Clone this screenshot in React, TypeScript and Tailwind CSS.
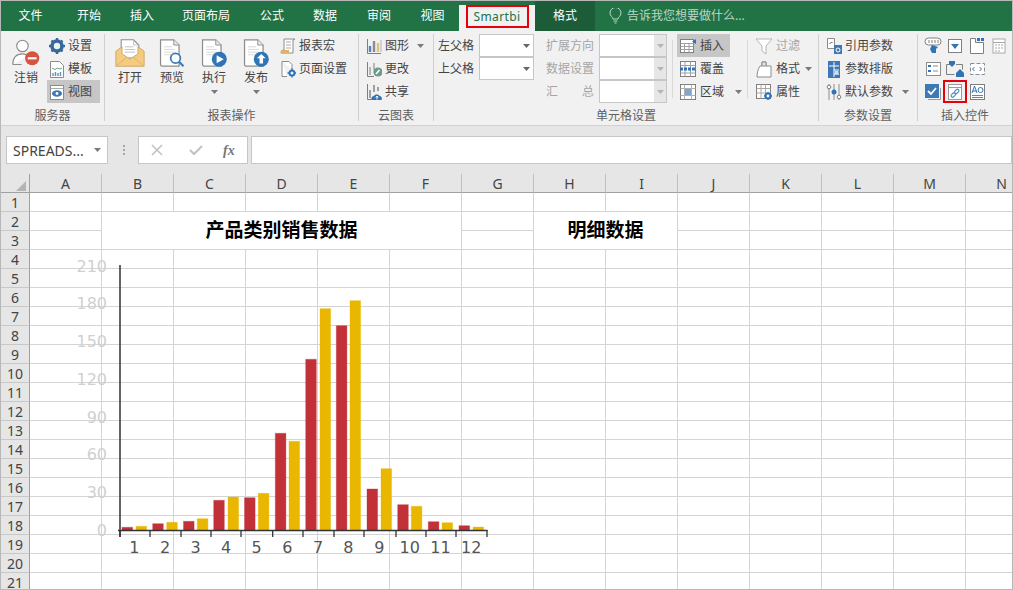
import type { ReactNode } from "react";

const tabs = [
  { name: "文件", w: "w-[59px]" },
  { name: "开始", w: "w-[58px]" },
  { name: "插入", w: "w-[48px]" },
  { name: "页面布局", w: "w-[80px]" },
  { name: "公式", w: "w-[52px]" },
  { name: "数据", w: "w-[54px]" },
  { name: "审阅", w: "w-[54px]" },
  { name: "视图", w: "w-[53px]" },
];

const columns = ["A", "B", "C", "D", "E", "F", "G", "H", "I", "J", "K", "L", "M", "N"];
const rows = Array.from({ length: 21 }, (_, i) => i + 1);

// left, top of each bar pair, read off the picture
const bars = [
  [122, 527.3, 136, 526.3],
  [152.7, 523.7, 166.7, 522.3],
  [183.5, 521.3, 197.3, 518.7],
  [213.7, 500.3, 228, 497],
  [244.5, 497.7, 258.3, 493.3],
  [275.3, 433.3, 289, 441.3],
  [305.7, 359.3, 320, 308.7],
  [336.3, 325.7, 350, 300.7],
  [367, 489, 381, 468.7],
  [397.7, 504.7, 411.3, 506.3],
  [428.3, 521.7, 442, 522.7],
  [459, 525.7, 473, 527],
];
const ticks = [120, 150, 181, 211, 241, 272.7, 303, 334, 364, 396, 426, 456, 487];
const yLabels = [
  ["210", 266],
  ["180", 303],
  ["150", 341],
  ["120", 379],
  ["90", 417],
  ["60", 454],
  ["30", 492],
  ["0", 530],
] as const;

const Caret = ({ color = "#7a7a7a" }: { color?: string }) => (
  <svg width="7" height="4" viewBox="0 0 7 4" className="shrink-0">
    <path d="M0 0h7L3.5 4z" fill={color} />
  </svg>
);

const Ico = ({ children, w = 16 }: { children: ReactNode; w?: number }) => (
  <svg width={w} height="18" viewBox={`0 0 ${w} 18`} fill="none" className="shrink-0">
    {children}
  </svg>
);

const Doc = () => (
  <>
    <path d="M4 2h15l6 6v24H6a2 2 0 0 1-2-2z" fill="#fff" stroke="#8c8c8c" strokeWidth="1.4" />
    <path d="M19 2v6h6" fill="#e8e8e8" stroke="#8c8c8c" />
    <path d="M8 10h9M8 13h12M8 16h12M8 19h8" stroke="#d4d4d4" />
  </>
);

const Big = ({ children }: { children: ReactNode }) => (
  <svg width="30" height="30" viewBox="0 0 34 34" fill="none" className="shrink-0">
    {children}
  </svg>
);

const LogoutIcon = () => (
  <Big>
    <circle cx="13" cy="9" r="6.5" fill="#fff" stroke="#8c8c8c" strokeWidth="1.3" />
    <path d="M2 30c0-8 4-12 11-12 3 0 5 1 7 2M2 30h10" stroke="#8c8c8c" strokeWidth="1.3" fill="#fff" />
    <circle cx="24" cy="23" r="8" fill="#d9543f" />
    <path d="M19 23h10" stroke="#fff" strokeWidth="2.4" />
  </Big>
);

const OpenIcon = () => (
  <Big>
    <path d="M7 2h14l6 6v16H7z" fill="#fff" stroke="#8c8c8c" strokeWidth="1.2" />
    <path d="M21 2v6h6M11 10h10M11 13h12M11 16h12" stroke="#bdbdbd" />
    <path d="M1 15l7-5v8l9 6 9-6v-8l7 5v17H1z" fill="#f4cb7f" stroke="#c9a25e" />
    <path d="M1 32l12-10h8l12 10" stroke="#dcb267" />
  </Big>
);

const PreviewIcon = () => (
  <Big>
    <Doc />
    <circle cx="21" cy="23" r="5.5" fill="#fff" stroke="#3d7ab5" strokeWidth="2" />
    <path d="M25 27l5 5" stroke="#3d7ab5" strokeWidth="2.4" />
  </Big>
);

const RunIcon = () => (
  <Big>
    <Doc />
    <circle cx="23" cy="24" r="8.5" fill="#2f75b5" />
    <path d="M20 19.5l8 4.5-8 4.5z" fill="#fff" />
  </Big>
);

const PublishIcon = () => (
  <Big>
    <Doc />
    <circle cx="23" cy="24" r="8.5" fill="#2f75b5" />
    <path d="M23 18l5 5h-3v6h-4v-6h-3z" fill="#fff" />
  </Big>
);

const GearIcon = () => (
  <Ico>
    <circle cx="8" cy="9" r="5" stroke="#35689c" strokeWidth="3.6" />
    <path d="M8 1v3M8 14v3M0 9h3M13 9h3M2.5 3.5l2 2M11.5 12.5l2 2M2.5 14.5l2-2M11.5 5.5l2-2" stroke="#35689c" strokeWidth="2.4" />
  </Ico>
);

const TemplateIcon = () => (
  <Ico>
    <path d="M1.5 1.5h9l4 4v12h-13z" fill="#fff" stroke="#8c8c8c" />
    <path d="M3 8l3 1.5 2-1.5 3 1 2-1" stroke="#6aa67c" />
    <path d="M4 16v-3M6.5 16v-4M9 16v-3M11.5 16v-4" stroke="#5c8fc4" strokeWidth="1.4" />
  </Ico>
);

const ViewIcon = () => (
  <Ico>
    <rect x="1.5" y="2.5" width="13" height="14" fill="#fff" stroke="#8c8c8c" />
    <path d="M1.5 5.5h13" stroke="#a8a8a8" />
    <ellipse cx="8" cy="10.5" rx="5" ry="3.2" fill="#3d7ab5" />
    <circle cx="8" cy="10.5" r="1.4" fill="#fff" />
  </Ico>
);

const MacroIcon = () => (
  <Ico>
    <path d="M4 2h11l-2 1v13H1c0-2 1-3 3-3z" fill="#fff" stroke="#8c8c8c" />
    <path d="M6 5h5M6 8h5M6 11h5" stroke="#a8a8a8" />
    <path d="M1 13h8v3H1z" fill="#e2b264" />
  </Ico>
);

const PageSetupIcon = () => (
  <Ico>
    <path d="M2 1.5h7l3 3v5M2 1.5v15h5" stroke="#8c8c8c" fill="#fff" />
    <circle cx="12" cy="13" r="2.5" stroke="#2f75b5" strokeWidth="2" />
    <path d="M12 8.5v2M12 15.5v2M7.5 13h2M14.5 13h2" stroke="#2f75b5" strokeWidth="1.4" />
  </Ico>
);

const ShapeIcon = () => (
  <Ico>
    <path d="M1.5 2v14.5H15" stroke="#7f7f7f" />
    <path d="M4 15V9" stroke="#4f86bd" strokeWidth="2.4" />
    <path d="M8 15V4" stroke="#8c8c8c" strokeWidth="2.4" />
    <path d="M12 15V6" stroke="#e6c07b" strokeWidth="2.4" />
    <path d="M15 15V3" stroke="#c4c4c4" strokeWidth="1.4" />
  </Ico>
);

const ChangeIcon = () => (
  <Ico>
    <path d="M1.5 2v14.5H8" stroke="#7f7f7f" />
    <path d="M4 15V7M8 10V3" stroke="#a8a8a8" strokeWidth="1.6" />
    <circle cx="12" cy="12" r="4.6" fill="#6c9a86" />
    <path d="M10 14l3.5-4" stroke="#fff" strokeWidth="1.6" />
  </Ico>
);

const ShareIcon = () => (
  <Ico>
    <path d="M1.5 1v15.5H7" stroke="#7f7f7f" />
    <path d="M4 15V7M8 9V2M12 8V4" stroke="#8c8c8c" strokeWidth="1.6" />
    <path d="M6 17c-1.500-2 0-4 2-4 .5-2 5-2 5.500 0 2 0 3 2 2 4z" fill="#2f75b5" />
    <path d="M11 16.500v-3M9.800 14.500l1.200-1.500 1.200 1.500" stroke="#fff" />
  </Ico>
);

const InsertIcon = () => (
  <Ico w={18}>
    <rect x="1.500" y="2.500" width="13" height="13" fill="#fff" stroke="#7f7f7f" />
    <path d="M1.500 6.500h13M1.500 9.500h13M1.500 12.500h13M5.500 6.500v9M10 6.500v9" stroke="#a0a0a0" />
    <path d="M13 4.500l4-2.500v5z" fill="#2f75b5" />
  </Ico>
);

const CoverIcon = () => (
  <Ico w={18}>
    <rect x="1.500" y="1.500" width="15" height="15" fill="#fff" stroke="#7f7f7f" />
    <path d="M1.500 5.500h15M1.500 13h15M6 1.500v15M11.500 1.500v15" stroke="#a0a0a0" />
    <path d="M1 9h16" stroke="#2f75b5" strokeWidth="3" strokeDasharray="3 1" />
  </Ico>
);

const AreaIcon = () => (
  <Ico w={18}>
    <rect x="1.500" y="1.500" width="15" height="15" fill="#fff" stroke="#7f7f7f" />
    <path d="M1.500 5.500h15M1.500 12.500h15M5.500 1.500v15M12.500 1.500v15" stroke="#b0b0b0" />
    <rect x="6" y="6" width="6" height="6" fill="#7fa6cc" />
  </Ico>
);

const FilterIcon = () => (
  <Ico w={18}>
    <path d="M1 2h16l-6 7v8l-4-3V9z" fill="#fff" stroke="#b5b5b5" />
  </Ico>
);

const FormatIcon = () => (
  <Ico w={18}>
    <path d="M7 2h4v4h5v11H2c0-4 1-8 3-11h2z" fill="#fff" stroke="#8c8c8c" />
    <path d="M7 2h4v4H7z" fill="#e3e3e3" stroke="#8c8c8c" />
  </Ico>
);

const PropIcon = () => (
  <Ico w={18}>
    <rect x="1.500" y="1.500" width="14" height="14" fill="#fff" stroke="#7f7f7f" />
    <path d="M1.500 5.500h14M1.500 10h14M6 1.500v14M10.500 1.500v14" stroke="#a8a8a8" />
    <circle cx="13" cy="13" r="2.500" stroke="#2f75b5" strokeWidth="2.200" />
    <path d="M13 9v1.500M13 15.500v1.500M9 13h1.500M15.500 13h1.500" stroke="#2f75b5" strokeWidth="1.400" />
  </Ico>
);

const RefParamIcon = () => (
  <Ico>
    <path d="M1.500 1.500h7v10h-7z" fill="#fff" stroke="#8c8c8c" />
    <path d="M3.500 7l2-2 1 1" stroke="#5b5b5b" />
    <rect x="8" y="8" width="8" height="9" fill="#3d7ab5" />
    <circle cx="12" cy="13" r="2" stroke="#fff" />
  </Ico>
);

const LayoutParamIcon = () => (
  <Ico>
    <rect x="2" y="1" width="12" height="17" fill="#3d7ab5" />
    <path d="M8 2v15M3 6h10M8 10h5M8 14h5" stroke="#fff" />
    <rect x="9" y="11" width="3.500" height="3.500" fill="#cfe0f0" />
  </Ico>
);

const DefaultParamIcon = () => (
  <Ico>
    <path d="M3 1v16M8 1v16M13 1v16" stroke="#8c8c8c" />
    <circle cx="3" cy="4" r="1.800" fill="#fff" stroke="#7f7f7f" />
    <circle cx="8" cy="9" r="2.500" fill="#2f75b5" />
    <circle cx="13" cy="14" r="1.800" fill="#fff" stroke="#7f7f7f" />
  </Ico>
);

const controls: { key: string; icon: ReactNode; boxed?: boolean }[] = [
  {
    key: "bubble",
    icon: (
      <Ico w={18}>
        <rect x="1" y="1" width="16" height="7" rx="3.500" fill="#fff" stroke="#7f7f7f" />
        <path d="M5 3v3M8 3v3M11 3v3M14 3v3" stroke="#7f7f7f" />
        <path d="M8 8l6 2-2 2v4H8l-2-4z" fill="#2f75b5" />
      </Ico>
    ),
  },
  {
    key: "combo",
    icon: (
      <Ico>
        <rect x="1.500" y="2.500" width="13" height="13" fill="#fff" stroke="#7f7f7f" />
        <path d="M4 7h8l-4 5z" fill="#2f75b5" />
      </Ico>
    ),
  },
  {
    key: "tab",
    icon: (
      <Ico>
        <path d="M1.500 1.500h5v4h8v11h-13z" fill="#fff" stroke="#7f7f7f" />
        <rect x="8" y="1" width="3" height="3" fill="#2f75b5" />
        <rect x="12" y="1" width="3" height="3" fill="#2f75b5" />
      </Ico>
    ),
  },
  {
    key: "date",
    icon: (
      <Ico w={14}>
        <rect x="1" y="2" width="12" height="14" fill="#fff" stroke="#a8a8a8" />
        <path d="M1 5.500h12M3 8h2M6 8h2M9 8h2M3 11h2M6 11h2M9 11h2M3 14h2M6 14h2" stroke="#a8a8a8" />
      </Ico>
    ),
  },
  {
    key: "list",
    icon: (
      <Ico>
        <rect x="1.500" y="2.500" width="14" height="13" fill="#fff" stroke="#8c8c8c" />
        <path d="M3 6h3M3 11h3" stroke="#2f75b5" strokeWidth="2" />
        <path d="M8 6h5M8 11h5" stroke="#8c8c8c" />
      </Ico>
    ),
  },
  {
    key: "tree",
    icon: (
      <Ico w={20}>
        <path d="M1.500 4.500h4M11 4.500h6.500v5M1.500 4.500v10h8" stroke="#7f7f7f" />
        <path d="M4 1h6v3l-3 3-3-3z" fill="#2f75b5" />
        <path d="M15 9l4 4v4h-8v-4z" fill="#2f75b5" />
      </Ico>
    ),
  },
  {
    key: "code",
    icon: (
      <Ico>
        <rect x="1.500" y="3.500" width="14" height="11" stroke="#8c8c8c" fill="#fff" strokeDasharray="4 2" />
        <path d="M5.500 7l-2 2 2 2M10.500 7l2 2-2 2" stroke="#2f75b5" />
      </Ico>
    ),
  },
  { key: "blank", icon: <span className="w-[14px]" /> },
  {
    key: "check",
    icon: (
      <Ico w={18}>
        <path d="M4 16.500h12.500V5" stroke="#9a9a9a" />
        <rect x="1" y="1" width="14" height="14" fill="#3d7ab5" />
        <path d="M4 8l3 3 5-6" stroke="#fff" strokeWidth="1.800" />
      </Ico>
    ),
  },
  {
    key: "link",
    boxed: true,
    icon: (
      <Ico>
        <rect x="1.500" y="1.500" width="13" height="15" fill="#fff" stroke="#9a9a9a" />
        <path d="M1.500 4.500h13" stroke="#9a9a9a" />
        <g stroke="#5b8fc4" strokeWidth="1.200">
          <rect x="3.800" y="10.500" width="5" height="3" rx="1.500" transform="rotate(-45 6.300 12)" />
          <rect x="7.200" y="7" width="5" height="3" rx="1.500" transform="rotate(-45 9.700 8.500)" />
        </g>
      </Ico>
    ),
  },
  {
    key: "text",
    icon: (
      <Ico>
        <rect x="1.500" y="1.500" width="14" height="15" fill="#fff" stroke="#7f7f7f" />
        <path d="M3 10l2.500-7L8 10M4 8h3" stroke="#2f75b5" />
        <circle cx="11.500" cy="7" r="2.500" stroke="#2f75b5" />
        <path d="M3 12.500h11M3 14.500h11" stroke="#7f7f7f" />
      </Ico>
    ),
  },
];

const Small = ({
  icon,
  label,
  selected,
  muted,
  caret,
}: {
  icon: ReactNode;
  label: string;
  selected?: boolean;
  muted?: boolean;
  caret?: string;
}) => (
  <div className={`flex h-[23px] items-center gap-[3px] px-[2px] ${selected ? "bg-[#c6c6c6]" : ""}`}>
    {icon}
    <span className={`whitespace-nowrap ${muted ? "text-[#a6a6a6]" : "text-[#444444]"}`}>{label}</span>
    {caret && (
      <span className={caret}>
        <Caret />
      </span>
    )}
  </div>
);

const BigButton = ({ icon, label, caret }: { icon: ReactNode; label: string; caret?: boolean }) => (
  <div className="flex w-[42px] flex-col items-center pt-[4px]">
    {icon}
    <span className="mt-[1px] leading-[18px] text-[#444444]">{label}</span>
    {caret && (
      <span className="mt-[3px] flex">
        <Caret />
      </span>
    )}
  </div>
);

const Group = ({ width, label, children }: { width: string; label: string; children: ReactNode }) => (
  <div className={`flex h-[87px] flex-col border-r border-[#d0d0d0] ${width}`}>
    <div className="flex h-[69px]">{children}</div>
    <div className="h-[18px] pt-[7px] text-center leading-[12px] text-[#5f5f5f]">{label}</div>
  </div>
);

const Select = ({ width, disabled }: { width: string; disabled?: boolean }) => (
  <div className={`flex h-[23px] items-stretch justify-end border border-[#c6c6c6] bg-white ${width}`}>
    <div className={`flex w-[12px] items-center justify-center ${disabled ? "bg-[#e6e6e6]" : "mr-[1px]"}`}>
      <Caret color={disabled ? "#b5b5b5" : "#666666"} />
    </div>
  </div>
);

const FieldLabel = ({ children, muted }: { children: ReactNode; muted?: boolean }) => (
  <div className={`flex h-[23px] items-center whitespace-nowrap ${muted ? "text-[#a6a6a6]" : "text-[#444444]"}`}>
    {children}
  </div>
);

const Chart = () => (
  <svg
    width="1011"
    height="416"
    viewBox="1 174 1011 416"
    className="pointer-events-none absolute top-0 left-0"
    fontFamily="DejaVu Sans, sans-serif"
    fontSize="16"
  >
    {yLabels.map(([t, y]) => (
      <text key={t} x="107" y={y + 6} textAnchor="end" fill="#d0d0d0">
        {t}
      </text>
    ))}
    {bars.map(([rx, ry, yx, yy], i) => (
      <g key={i}>
        <rect x={rx} y={ry} width="10.600" height={530 - ry} fill="#c23038" stroke="#c23038" strokeOpacity=".35" />
        <rect x={yx} y={yy} width="10.600" height={530 - yy} fill="#e9b600" stroke="#e9b600" strokeOpacity=".35" />
        <text x={(rx + yx + 10.600) / 2} y="553" textAnchor="middle" fill="#555555">
          {i + 1}
        </text>
      </g>
    ))}
    <path d="M120 265V537M118 530.500H487.500" stroke="#333333" strokeWidth="1.500" fill="none" />
    {ticks.map((x) => (
      <path key={x} d={`M${x} 530V537`} stroke="#333333" strokeWidth="1.300" />
    ))}
  </svg>
);

const Sheet = () => (
  <div className="relative grid grid-cols-[29px_repeat(14,72px)] grid-rows-[19px] auto-rows-[19px] bg-white font-['Noto_Sans','Noto_Sans_CJK_SC',sans-serif]">
    <div className="flex items-end justify-end border-r border-b border-[#a0a0a0] bg-[#e6e6e6] pr-[3px] pb-[1px]">
      <div className="h-0 w-0 border-t-[10px] border-l-[10px] border-t-transparent border-l-transparent [border-right:10px_solid_#b4b4b4]" />
    </div>
    {columns.map((c) => (
      <div
        key={c}
        className="flex items-center justify-center border-r border-b border-r-[#c0c0c0] border-b-[#a0a0a0] bg-[#e6e6e6] text-[14px] text-[#444444]"
      >
        {c}
      </div>
    ))}
    {rows.map((r) => (
      <div key={r} className="contents">
        <div className="flex items-center justify-center border-r border-b border-r-[#a0a0a0] border-b-[#c8c8c8] bg-[#e6e6e6] text-[14px] text-[#444444]">
          {r}
        </div>
        {columns.map((c) => {
          const merged = (r === 2 || r === 3) && ["B", "C", "D", "E", "F", "H", "I"].includes(c);
          if (!merged) {
            return <div key={c} className="border-r border-b border-[#d4d4d4]" />;
          }
          if (r === 2 && c === "B") {
            return (
              <div
                key={c}
                className="col-span-5 row-span-2 flex items-center justify-center border-r border-b border-[#d4d4d4] text-[19px] font-bold text-black"
              >
                产品类别销售数据
              </div>
            );
          }
          if (r === 2 && c === "H") {
            return (
              <div
                key={c}
                className="col-span-2 row-span-2 flex items-center justify-center border-r border-b border-[#d4d4d4] text-[19px] font-bold text-black"
              >
                明细数据
              </div>
            );
          }
          return null;
        })}
      </div>
    ))}
    <Chart />
  </div>
);

export default function App() {
  return (
    <div className="box-border flex h-[590px] w-[1013px] flex-col overflow-hidden border border-[#b8b8b8] bg-[#e6e6e6] font-['Noto_Sans','Noto_Sans_CJK_SC',sans-serif] text-[12px]">
      {/* tab strip */}
      <div className="flex h-[30px] shrink-0 bg-[#217346] text-white">
        {tabs.map((t) => (
          <div key={t.name} className={`flex items-center justify-center pb-[1px] ${t.w}`}>
            {t.name}
          </div>
        ))}
        <div className="mt-[4px] flex w-[76px] items-start justify-center bg-[#f1f1f1]">
          <span className="w-[63px] border-2 border-[#e8000b] text-center leading-[19px] tracking-[0.4px] text-[#217346]">
            Smartbi
          </span>
        </div>
        <div className="flex w-[60px] items-center justify-center bg-[#1c5c39]">格式</div>
        <div className="ml-[14px] flex items-center gap-[5px] text-[#bcd6c6]">
          <svg width="13" height="16" viewBox="0 0 13 16" fill="none" stroke="#bcd6c6">
            <path d="M4 11c0-2-3-3-3-6a5.500 5.500 0 0 1 11 0c0 3-3 4-3 6z" />
            <path d="M4.500 13h4M5.500 15h2" />
          </svg>
          告诉我您想要做什么...
        </div>
      </div>

      {/* ribbon */}
      <div className="flex h-[95px] shrink-0 border-b border-[#d2d2d2] bg-[#f1f1f1] pt-[3px]">
        <Group width="w-[104px]" label="服务器">
          <div className="w-[46px] pl-[4px]">
            <BigButton icon={<LogoutIcon />} label="注销" />
          </div>
          <div className="w-[53px]">
            <Small icon={<GearIcon />} label="设置" />
            <Small icon={<TemplateIcon />} label="模板" />
            <Small icon={<ViewIcon />} label="视图" selected />
          </div>
        </Group>

        <Group width="w-[254px]" label="报表操作">
          <div className="flex pl-[4px]">
            <BigButton icon={<OpenIcon />} label="打开" />
            <BigButton icon={<PreviewIcon />} label="预览" />
            <BigButton icon={<RunIcon />} label="执行" caret />
            <BigButton icon={<PublishIcon />} label="发布" caret />
          </div>
          <div className="pl-[1px]">
            <Small icon={<MacroIcon />} label="报表宏" />
            <Small icon={<PageSetupIcon />} label="页面设置" />
          </div>
        </Group>

        <Group width="w-[75px]" label="云图表">
          <div className="pl-[5px]">
            <Small icon={<ShapeIcon />} label="图形" caret="ml-[5px]" />
            <Small icon={<ChangeIcon />} label="更改" />
            <Small icon={<ShareIcon />} label="共享" />
          </div>
        </Group>

        <Group width="w-[385px]" label="单元格设置">
          <div className="flex pl-[4px]">
            <div className="w-[41px]">
              <FieldLabel>左父格</FieldLabel>
              <FieldLabel>上父格</FieldLabel>
            </div>
            <div className="w-[55px]">
              <Select width="w-[55px]" />
              <Select width="w-[55px]" />
            </div>
            <div className="ml-[12px] w-[53px]">
              <FieldLabel muted>扩展方向</FieldLabel>
              <FieldLabel muted>数据设置</FieldLabel>
              <FieldLabel muted>
                <div className="flex w-[48px] justify-between">
                  <span>汇</span>
                  <span>总</span>
                </div>
              </FieldLabel>
            </div>
            <div className="w-[68px]">
              <Select width="w-[68px]" disabled />
              <Select width="w-[68px]" disabled />
              <Select width="w-[68px]" disabled />
            </div>
            <div className="mt-[6px] ml-[5px] h-[58px] w-px bg-[#d8d8d8]" />
            <div className="ml-[4px] w-[70px]">
              <div className="w-[53px]">
                <Small icon={<InsertIcon />} label="插入" selected />
              </div>
              <Small icon={<CoverIcon />} label="覆盖" />
              <Small icon={<AreaIcon />} label="区域" caret="ml-[8px]" />
            </div>
            <div className="mt-[6px] h-[58px] w-px bg-[#d8d8d8]" />
            <div className="ml-[5px]">
              <Small icon={<FilterIcon />} label="过滤" muted />
              <Small icon={<FormatIcon />} label="格式" caret="ml-[2px]" />
              <Small icon={<PropIcon />} label="属性" />
            </div>
          </div>
        </Group>

        <Group width="w-[99px]" label="参数设置">
          <div className="pl-[5px]">
            <Small icon={<RefParamIcon />} label="引用参数" />
            <Small icon={<LayoutParamIcon />} label="参数排版" />
            <Small icon={<DefaultParamIcon />} label="默认参数" caret="ml-[6px]" />
          </div>
        </Group>

        <div className="flex h-[87px] flex-1 flex-col">
          <div className="ml-[4px] grid h-[69px] w-[88px] grid-cols-4 auto-rows-[23px]">
            {controls.map((c) => (
              <div key={c.key} className="flex items-center justify-center">
                {c.boxed ? (
                  <div className="flex h-[23px] w-[24px] shrink-0 items-center justify-center border-2 border-[#e8000b]">
                    {c.icon}
                  </div>
                ) : (
                  c.icon
                )}
              </div>
            ))}
          </div>
          <div className="h-[18px] pt-[7px] text-center leading-[12px] text-[#5f5f5f]">插入控件</div>
        </div>
      </div>

      {/* formula bar */}
      <div className="flex h-[48px] shrink-0 items-start pt-[10px]">
        <div className="ml-[5px] flex h-[28px] w-[102px] items-center border border-[#c6c6c6] bg-white pr-[6px] pl-[6px] text-[14px] text-[#444444]">
          <span className="flex-1">SPREADS...</span>
          <Caret />
        </div>
        <div className="ml-[14px] flex h-[28px] w-[3px] flex-col items-center justify-center gap-[2px]">
          <span className="h-[2px] w-[2px] bg-[#a6a6a6]" />
          <span className="h-[2px] w-[2px] bg-[#a6a6a6]" />
          <span className="h-[2px] w-[2px] bg-[#a6a6a6]" />
        </div>
        <div className="ml-[13px] flex h-[28px] w-[110px] items-center border border-[#c6c6c6] bg-white pl-[12px]">
          <svg width="12" height="12" viewBox="0 0 12 12" stroke="#c2c2c2" strokeWidth="1.600" fill="none">
            <path d="M1 1l10 10M11 1L1 11" />
          </svg>
          <svg width="14" height="12" viewBox="0 0 14 12" stroke="#c2c2c2" strokeWidth="2" fill="none" className="ml-[26px]">
            <path d="M1 6l4 4 8-8" />
          </svg>
          <span className="ml-[20px] font-['Liberation_Serif',serif] text-[14px] font-bold text-[#777777] italic">fx</span>
        </div>
        <div className="ml-[3px] h-[28px] flex-1 border border-[#c6c6c6] bg-white" />
      </div>

      <Sheet />
    </div>
  );
}
